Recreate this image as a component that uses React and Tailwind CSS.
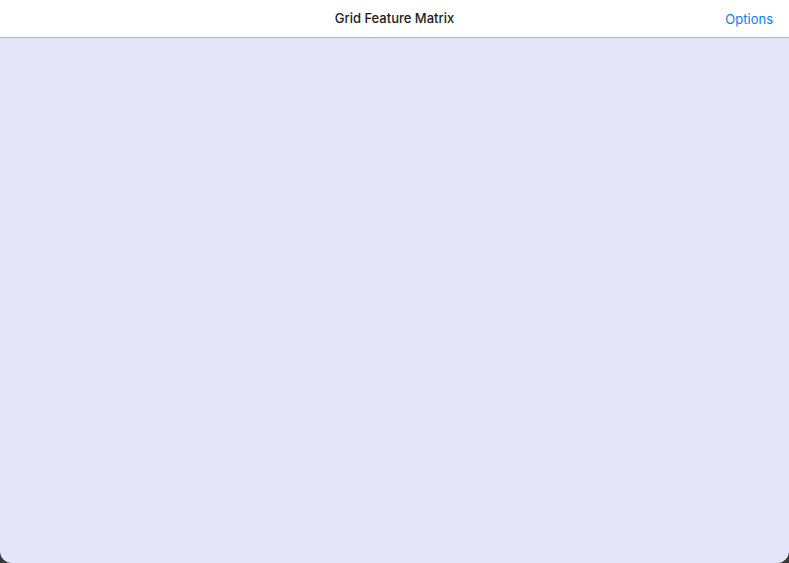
export default function App() {
  return (
    <div className="w-[789px] h-[563px] bg-[#3a3a3a] flex flex-col" style={{ fontFamily: 'Inter, "Noto Sans", sans-serif' }}>
      <header className="h-[38px] shrink-0 bg-white border-b border-[#b4b4b8] grid grid-cols-[1fr_auto_1fr] items-center px-4">
        <div />
        <h1 className="text-[13px] font-medium text-[#1c1c1e] pt-[1px]">Grid Feature Matrix</h1>
        <div className="flex justify-end">
          <button type="button" className="text-[13px] text-[#0a7aff] pt-[2px]">
            Options
          </button>
        </div>
      </header>
      <main className="flex-1 bg-[#e4e5f9] rounded-b-[12px]" />
    </div>
  )
}
